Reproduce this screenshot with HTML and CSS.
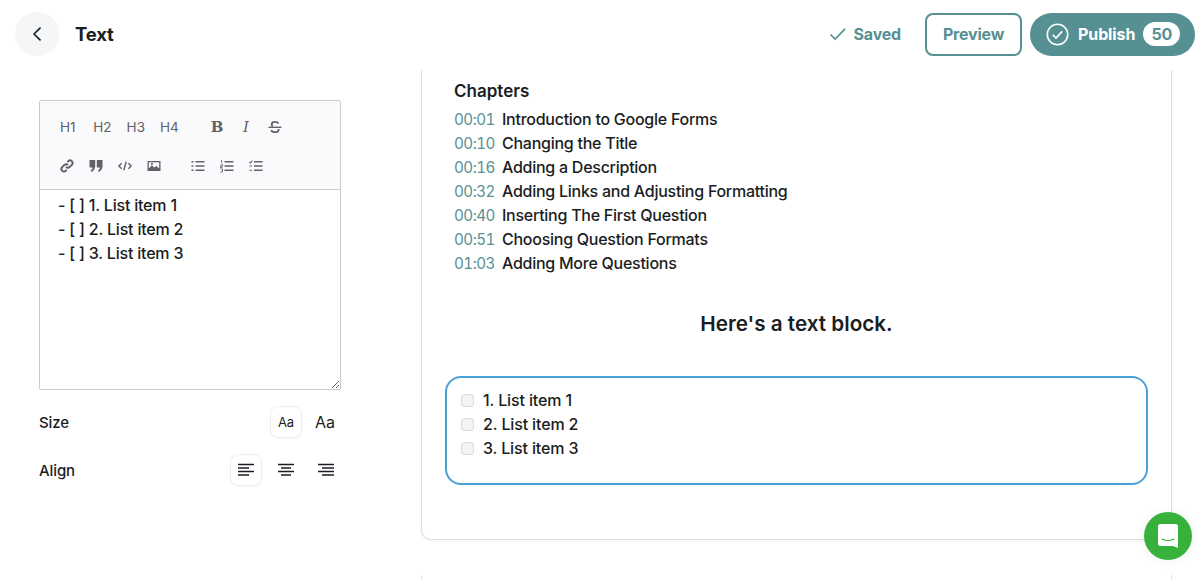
FILE: index.html
```html
<!DOCTYPE html>
<html lang="en">
<head>
<meta charset="utf-8">
<title>Text</title>
<link rel="stylesheet" href="styles.css">
</head>
<body>
<header class="topbar">
  <div class="top-left">
    <button class="back" aria-label="Back"><svg width="14" height="14" viewBox="0 0 14 14"><path d="M10 1.200 4 7l6 5.800" fill="none" stroke="#1a1d21" stroke-width="1.700" stroke-linecap="round" stroke-linejoin="round"/></svg></button>
    <h1 class="title">Text</h1>
  </div>
  <div class="top-right">
    <span class="saved"><svg width="18" height="14" viewBox="0 0 18 14"><path d="M1.500 7.500 6.200 12 16 1.800" fill="none" stroke="#579093" stroke-width="1.700"/></svg>Saved</span>
    <button class="preview">Preview</button>
    <button class="publish"><svg width="23" height="23" viewBox="0 0 23 23"><circle cx="11.500" cy="11.500" r="10.200" fill="none" stroke="#fff" stroke-width="1.600"/><path d="M6.800 11.800 10 15 16.200 8.400" fill="none" stroke="#fff" stroke-width="1.600"/></svg>Publish<span class="count">50</span></button>
  </div>
</header>
<main class="layout">
  <aside class="panel">
    <div class="editor">
      <div class="toolbar">
        <div class="tool-row">
          <div class="tool-group heads"><span>H1</span><span>H2</span><span>H3</span><span>H4</span></div>
          <div class="tool-group marks">
            <span class="glyph glyph-b">B</span>
            <span class="glyph glyph-i">I</span>
            <svg class="ic" viewBox="0 0 14 14"><path d="M10.500 3.600C9.800 2.300 8.500 1.900 7 1.900 5 1.900 3.700 2.900 3.700 4.400c0 .8.400 1.400 1 1.800M10.700 9c.2 2.200-1.400 3.200-3.600 3.200-1.800 0-3.300-.7-3.900-2.100" fill="none" stroke="#606266" stroke-width="1.800"/><path d="M.5 7.300h13" stroke="#606266" stroke-width="1.400"/></svg>
          </div>
        </div>
        <div class="tool-row">
          <div class="tool-group inserts">
            <svg class="ic" viewBox="0 0 14 14"><g fill="none" stroke="#606266" stroke-width="1.900"><path d="M6 8a2.500 2.500 0 0 0 3.600 0l2.200-2.200a2.500 2.500 0 0 0-3.600-3.600L7.300 3"/><path d="M8 6a2.500 2.500 0 0 0-3.600 0L2.200 8.200a2.500 2.500 0 0 0 3.600 3.600l.9-.8"/></g></svg>
            <svg class="ic" viewBox="0 0 14 14"><path fill="#606266" d="M.5 1h5.700v6c0 2.800-1.500 4.800-3.600 6l-1-1.300c1.200-.8 1.900-1.900 2-3.200H.5zM7.800 1h5.700v6c0 2.800-1.500 4.800-3.600 6l-1-1.300c1.200-.8 1.900-1.900 2-3.200H7.800z"/></svg>
            <svg class="ic" viewBox="0 0 14 14"><path d="M3.600 4.300.9 7l2.700 2.700M10.400 4.300 13.100 7l-2.700 2.700M8.200 2.800 5.800 11.200" fill="none" stroke="#606266" stroke-width="1.400"/></svg>
            <svg class="ic" viewBox="0 0 14 14"><path fill="#606266" fill-rule="evenodd" d="M.5 2h13v10H.5zM1.800 3.300v6.200l3-3.200 2.400 2.300 2.200-1.700 2.800 2.500V3.300zM4 4h1.800v1.800H4z"/></svg>
          </div>
          <div class="tool-group lists">
            <svg class="ic" viewBox="0 0 14 14"><path d="M4.500 2.800h9M4.500 7h9M4.500 11.200h9M.5 2.800h2M.5 7h2M.5 11.200h2" stroke="#606266" stroke-width="1.500"/></svg>
            <svg class="ic" viewBox="0 0 14 14"><path d="M4.500 2.800h9M4.500 7h9M4.500 11.200h9" stroke="#606266" stroke-width="1.500"/><path d="M1.500 1v3M.5 5.800h2v1.400h-2v1.400h2M.5 10h2v3h-2" fill="none" stroke="#606266" stroke-width=".9"/></svg>
            <svg class="ic" viewBox="0 0 14 14"><path d="M5 2.800h8.500M5 7h8.500M5 11.200h8.500" stroke="#606266" stroke-width="1.500"/><path d="M.5 3 1.500 4 3.500 1.500M.5 7h2.500M.5 11.200h2.500" fill="none" stroke="#606266" stroke-width="1.100"/></svg>
          </div>
        </div>
      </div>
      <textarea class="source" spellcheck="false">- [ ] 1. List item 1
- [ ] 2. List item 2
- [ ] 3. List item 3</textarea>
    </div>
    <div class="setting size-row">
      <span>Size</span>
      <div class="options">
        <span class="opt active aa-small">Aa</span>
        <span class="opt aa-large">Aa</span>
      </div>
    </div>
    <div class="setting align-row">
      <span>Align</span>
      <div class="options">
        <span class="opt active"><svg class="al" viewBox="0 0 18 14"><path d="M1 1.500h16M1 5h11M1 8.500h16M1 12h11"/></svg></span>
        <span class="opt"><svg class="al" viewBox="0 0 18 14"><path d="M1 1.500h16M4 5h10M1 8.500h16M4 12h10"/></svg></span>
        <span class="opt"><svg class="al" viewBox="0 0 18 14"><path d="M1 1.500h16M5 5h12M1 8.500h16M5 12h12"/></svg></span>
      </div>
    </div>
  </aside>
  <section class="stage">
    <div class="card">
      <h2 class="chapters-title">Chapters</h2>
      <ul class="chapters">
        <li><a class="stamp">00:01</a>Introduction to Google Forms</li>
        <li><a class="stamp">00:10</a>Changing the Title</li>
        <li><a class="stamp">00:16</a>Adding a Description</li>
        <li><a class="stamp">00:32</a>Adding Links and Adjusting Formatting</li>
        <li><a class="stamp">00:40</a>Inserting The First Question</li>
        <li><a class="stamp">00:51</a>Choosing Question Formats</li>
        <li><a class="stamp">01:03</a>Adding More Questions</li>
      </ul>
      <h3 class="block-heading">Here's a text block.</h3>
      <div class="text-block">
        <label class="check"><span class="box"></span>1. List item 1</label>
        <label class="check"><span class="box"></span>2. List item 2</label>
        <label class="check"><span class="box"></span>3. List item 3</label>
      </div>
    </div>
    <div class="card next"></div>
  </section>
</main>
<button class="chat" aria-label="Chat"><svg width="24" height="26" viewBox="0 0 24 26"><path fill="#fff" d="M2 3.500A2.500 2.500 0 0 1 4.500 1h15A2.500 2.500 0 0 1 22 3.500V25l-5-2H4.500A2.500 2.500 0 0 1 2 20.500z"/><path d="M6 16c3.500 2 8.500 2 12 0" fill="none" stroke="#37b13c" stroke-width="1.200" stroke-linecap="round"/></svg></button>
</body>
</html>
```
FILE: styles.css
```css
* { box-sizing: border-box; }
html, body { height: 100%; }
body {
  margin: 0;
  height: 579px;
  overflow: hidden;
  background: #fff;
  color: #1a1d21;
  font-family: Inter, "Liberation Sans", sans-serif;
  font-size: 16px;
}
button { font-family: inherit; cursor: pointer; }

.topbar {
  height: 70px;
  display: flex;
  align-items: center;
  justify-content: space-between;
  padding: 0 5px 2px 15px;
  background: #fff;
}
.top-left { display: flex; align-items: center; gap: 16px; }
.back {
  width: 44px; height: 44px;
  border: 0; border-radius: 50%;
  background: #f5f6f7;
  display: flex; align-items: center; justify-content: center;
  padding: 0;
}
.title { margin: 0; font-size: 18.500px; font-weight: 700; letter-spacing: -0.2px; }
.top-right { display: flex; align-items: center; }
.saved {
  display: flex; align-items: center; gap: 7px;
  color: #579093; font-weight: 700; font-size: 16px;
  letter-spacing: -0.2px;
  margin-right: 24px;
}
.preview {
  width: 97px; height: 43px;
  border: 2px solid #579093; border-radius: 8px;
  background: #fff; color: #579093;
  font-size: 16px; font-weight: 700;
  letter-spacing: -0.2px;
  margin-right: 8px; padding: 0;
}
.publish {
  width: 165px; height: 43px;
  border: 0; border-radius: 22px;
  background: #579093; color: #fff;
  font-size: 16px; font-weight: 700;
  letter-spacing: -0.1px;
  display: flex; align-items: center;
  padding: 0 0 0 16px;
}
.publish svg { margin-right: 9px; }
.count {
  margin-left: 8px;
  width: 37px; height: 24px;
  border-radius: 12px;
  background: #fff; color: #579093;
  display: flex; align-items: center; justify-content: center;
}

.layout { display: flex; align-items: flex-start; height: 509px; }
.panel { width: 302px; margin: 30px 0 0 39px; flex: none; }
.editor { border: 1px solid #c9cbce; border-radius: 2px; height: 290px; display: flex; flex-direction: column; }
.toolbar {
  height: 89px; flex: none;
  background: #fafafc;
  border-bottom: 1px solid #c9cbce;
  padding: 6px 0 0 20px;
}
.tool-row { display: flex; height: 39px; align-items: center; }
.tool-group { display: flex; align-items: center; color: #606266; }
.heads { gap: 16.300px; font-size: 13.500px; width: 150px; }
.heads span { width: 17px; }
.marks { gap: 15px; }
.inserts { gap: 15px; width: 131px; }
.lists { gap: 15px; }
.ic { width: 14px; height: 14px; display: block; overflow: visible; }
.glyph {
  width: 14px;
  text-align: center;
  font-family: "DejaVu Serif", "Liberation Serif", serif;
  font-size: 15px;
  line-height: 16px;
}
.glyph-b { font-weight: 700; }
.glyph-i { font-style: italic; }
.source {
  flex: 1;
  border: 0; outline: 0;
  padding: 3px 18px;
  font: 500 16px/24px Inter, "Liberation Sans", sans-serif;
  letter-spacing: -0.2px;
  color: #1a1d21;
  resize: vertical;
  background: #fff;
  width: 100%;
}
.setting { display: flex; align-items: center; justify-content: space-between; font-size: 15px; font-weight: 500; letter-spacing: -0.1px; }
.size-row { margin-top: 16px; height: 32px; }
.align-row { margin-top: 16px; height: 32px; }
.options { display: flex; gap: 8px; margin-right: -1px; }
.opt {
  width: 32px; height: 32px;
  border: 1px solid transparent;
  border-radius: 8px;
  display: flex; align-items: center; justify-content: center;
  font-weight: 400;
}
.opt.active { border-color: #eceef0; box-shadow: 0 1px 2px rgba(0,0,0,.04); }
.aa-small { font-size: 13px; }
.aa-large { font-size: 16px; padding-right: 2px; }
.al { width: 18px; height: 14px; fill: none; stroke: #1a1d21; stroke-width: 1.700; }

.stage { margin-left: 80px; width: 751px; flex: none; }
.card {
  height: 470px;
  border: 1px solid #dcdee1;
  border-top: 0;
  border-radius: 0 0 10px 10px;
  padding: 9px 23px 0 23px;
  box-shadow: 0 1px 2px rgba(0,0,0,.05);
}
.next { height: 4px; padding: 0; margin-top: 35px; border-bottom: 0; border-radius: 0; box-shadow: none; }
.chapters-title { margin: 0 0 4px 9px; font-size: 17px; font-weight: 600; line-height: 24px; }
.chapters { list-style: none; margin: 0 0 0 9px; padding: 0; letter-spacing: -0.26px; font-weight: 500; }
.chapters li { display: flex; align-items: baseline; height: 24px; line-height: 24px; }
.stamp { flex: none; width: 48px; color: #579093; font-size: 15.200px; letter-spacing: -0.5px; font-variant-numeric: tabular-nums; font-weight: 400; }
.block-heading { margin: 34px 0 0; text-align: center; font-size: 20.700px; font-weight: 600; line-height: 30px; }
.text-block {
  margin-top: 37px;
  width: 703px; height: 109px;
  border: 2px solid #4ba0d8;
  border-radius: 16px;
  padding: 10px 14px;
  letter-spacing: -0.14px;
  font-weight: 500;
}
.check { display: flex; align-items: center; height: 24px; }
.box {
  width: 13px; height: 13px;
  margin-right: 9px;
  border: 1px solid #dcdcdc; border-radius: 3px;
  background: #f3f3f3;
}

.chat {
  position: fixed; left: 1144px; top: 512px;
  width: 48px; height: 48px;
  border: 0; border-radius: 50%;
  background: #37b13c;
  display: flex; align-items: center; justify-content: center;
  padding: 0;
  box-shadow: 0 1px 12px rgba(0,0,0,.06);
}
```
